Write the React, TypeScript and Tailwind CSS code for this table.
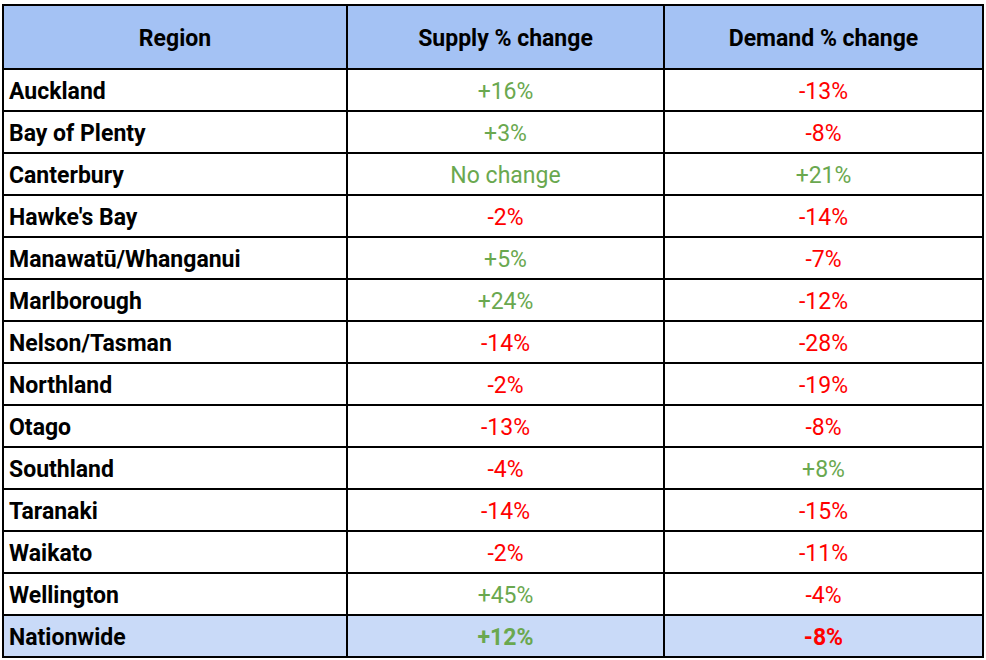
import React from "react";

type Row = { region: string; supply: string; demand: string };

const rows: Row[] = [
  { region: "Auckland", supply: "+16%", demand: "-13%" },
  { region: "Bay of Plenty", supply: "+3%", demand: "-8%" },
  { region: "Canterbury", supply: "No change", demand: "+21%" },
  { region: "Hawke's Bay", supply: "-2%", demand: "-14%" },
  { region: "Manawatū/Whanganui", supply: "+5%", demand: "-7%" },
  { region: "Marlborough", supply: "+24%", demand: "-12%" },
  { region: "Nelson/Tasman", supply: "-14%", demand: "-28%" },
  { region: "Northland", supply: "-2%", demand: "-19%" },
  { region: "Otago", supply: "-13%", demand: "-8%" },
  { region: "Southland", supply: "-4%", demand: "+8%" },
  { region: "Taranaki", supply: "-14%", demand: "-15%" },
  { region: "Waikato", supply: "-2%", demand: "-11%" },
  { region: "Wellington", supply: "+45%", demand: "-4%" },
];

// red for drops, green for everything else
const tone = (v: string) => (v.startsWith("-") ? "text-[#ff0000]" : "text-[#6aa84f]");

export default function App() {
  return (
    <div className="w-[986px] h-[660px] bg-white pt-[4px] pl-[2px] font-['Roboto',sans-serif] text-[23px] leading-none">
      <table className="border-collapse border-2 border-black table-fixed w-[980px]">
        <colgroup>
          <col className="w-[344px]" />
          <col className="w-[317px]" />
          <col className="w-[319px]" />
        </colgroup>
        <thead>
          {/* Header */}
          <tr className="h-[64px] bg-[#a4c2f4] font-bold text-black">
            <th className="border-2 border-black text-center pt-[2px]">Region</th>
            <th className="border-2 border-black text-center pt-[2px]">Supply % change</th>
            <th className="border-2 border-black text-center pt-[2px]">Demand % change</th>
          </tr>
        </thead>
        <tbody>
          {rows.map((r) => (
            <tr key={r.region} className="h-[42px]">
              <td className="border-2 border-black pl-[5px] pt-[2px] font-bold text-black">{r.region}</td>
              <td className={`border-2 border-black text-center pt-[2px] ${tone(r.supply)}`}>{r.supply}</td>
              <td className={`border-2 border-black text-center pt-[2px] ${tone(r.demand)}`}>{r.demand}</td>
            </tr>
          ))}
          {/* Totals */}
          <tr className="h-[42px] bg-[#c9daf8] font-bold">
            <td className="border-2 border-black pl-[5px] pt-[2px] text-black">Nationwide</td>
            <td className="border-2 border-black text-center pt-[2px] text-[#6aa84f]">+12%</td>
            <td className="border-2 border-black text-center pt-[2px] text-[#ff0000]">-8%</td>
          </tr>
        </tbody>
      </table>
    </div>
  );
}
